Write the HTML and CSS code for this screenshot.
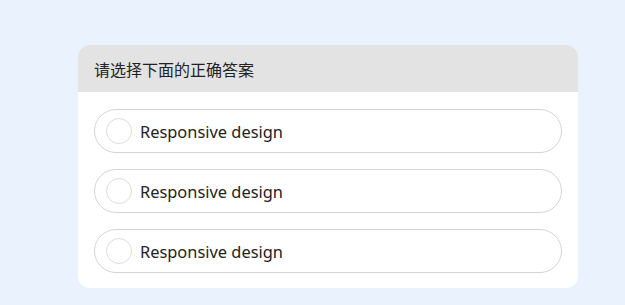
FILE: index.html
```html
<!DOCTYPE html>
<html>
<head>
<meta charset="utf-8">
<link rel="stylesheet" href="styles.css">
</head>
<body>
<div class="card">
  <div class="card-header">请选择下面的正确答案</div>
  <div class="options">
    <label class="option"><span class="radio"></span><span class="label">Responsive design</span></label>
    <label class="option"><span class="radio"></span><span class="label">Responsive design</span></label>
    <label class="option"><span class="radio"></span><span class="label">Responsive design</span></label>
  </div>
</div>
</body>
</html>
```
FILE: styles.css
```css
html, body {
  margin: 0;
  padding: 0;
  background: #eaf3fd;
}
body {
  padding: 45px 0 0 78px;
  font-family: "Noto Sans", "Noto Sans CJK SC", sans-serif;
}
.card {
  width: 500px;
  background: #ffffff;
  border-radius: 12px;
  overflow: hidden;
}
.card-header {
  height: 47px;
  background: #e3e3e3;
  display: flex;
  align-items: center;
  padding-left: 16px;
  font-family: "Noto Sans CJK SC", sans-serif;
  font-size: 16px;
  color: #222;
}
.options {
  display: flex;
  flex-direction: column;
  gap: 16px;
  padding: 17px 16px 15px;
}
.option {
  height: 42px;
  border: 1px solid #d4d4d4;
  border-radius: 22px;
  display: flex;
  align-items: center;
  padding-left: 11px;
  gap: 8px;
}
.radio {
  width: 24px;
  height: 24px;
  border: 1px solid #dcdcdc;
  border-radius: 50%;
  box-sizing: content-box;
}
.label {
  font-size: 16.4px;
  color: #222;
}
```
